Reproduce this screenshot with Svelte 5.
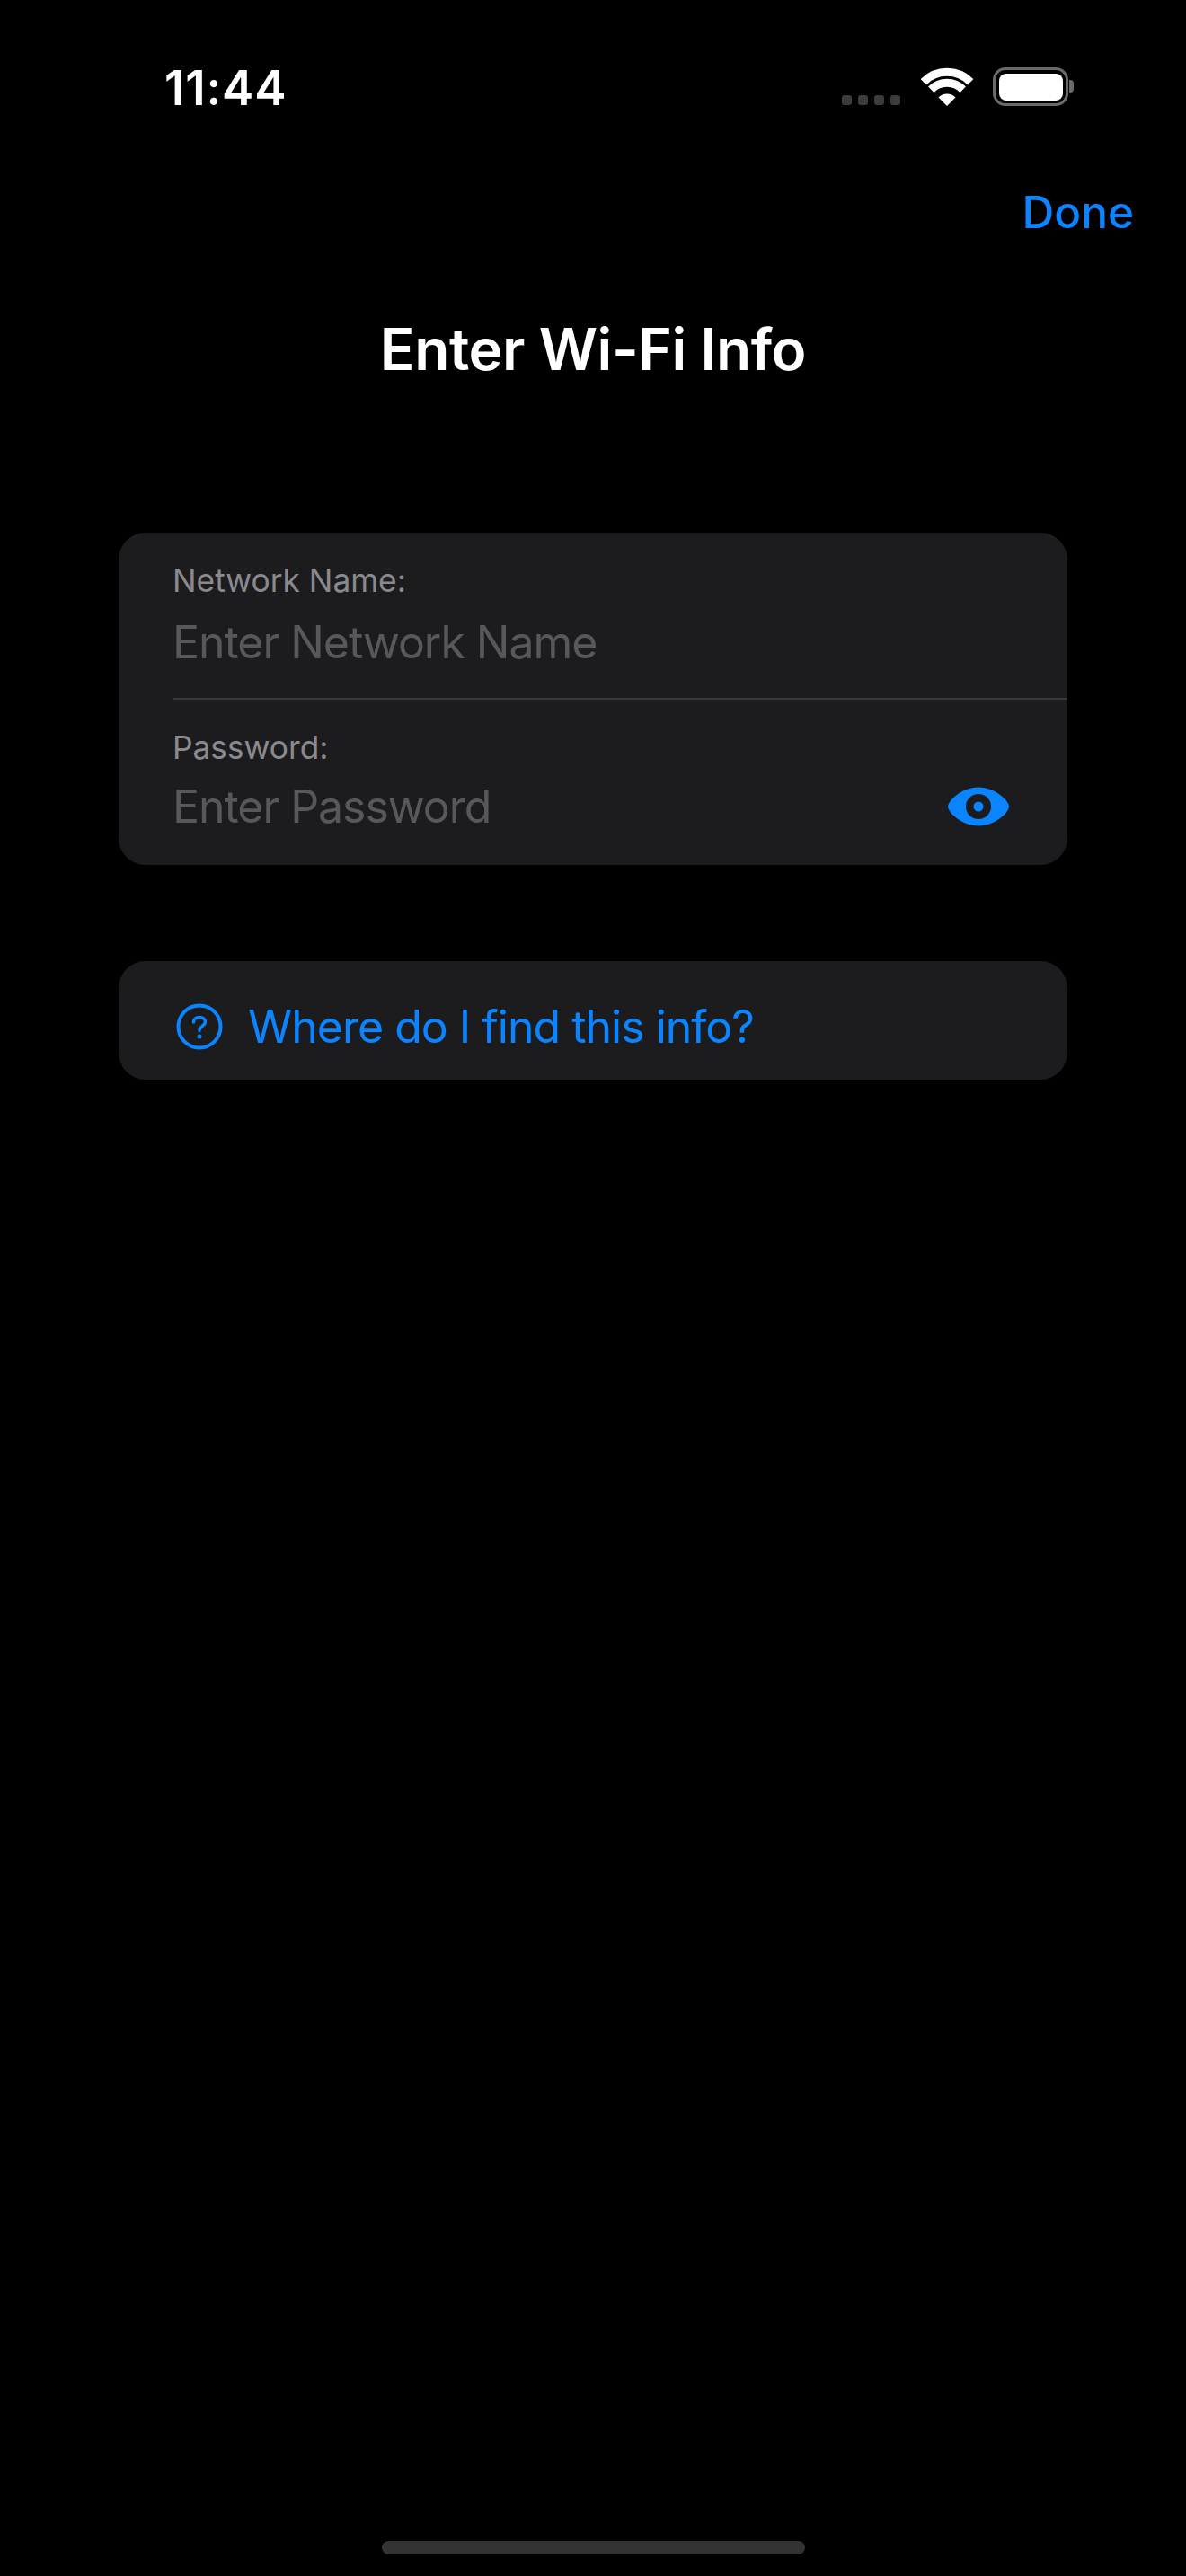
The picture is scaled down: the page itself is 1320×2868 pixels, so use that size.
<script>
  const fields = [
    { label: 'Network Name:', placeholder: 'Enter Network Name', eye: false },
    { label: 'Password:', placeholder: 'Enter Password', eye: true }
  ];
</script>

<div class="page">
  <header class="status">
    <span class="time">11:44</span>
    <div class="indicators">
      <div class="dots"><i></i><i></i><i></i><i></i></div>
      <svg class="wifi" width="58" height="43" viewBox="0 0 58 43" aria-hidden="true">
        <path d="M2.8 16.2A37 37 0 0 1 55.2 16.2" fill="none" stroke="#fff" stroke-width="9" />
        <path d="M11.3 24.7A25 25 0 0 1 46.700 24.700" fill="none" stroke="#fff" stroke-width="9" />
        <path d="M29 43L19.500 33.500A13.400 13.400 0 0 1 38.500 33.500Z" fill="#fff" />
      </svg>
      <div class="battery"><div class="fill"></div><div class="cap"></div></div>
    </div>
  </header>

  <div class="nav"><span class="done">Done</span></div>
  <h1>Enter Wi-Fi Info</h1>

  <section class="card">
    {#each fields as f, i}
      <div class="row" class:second={i === 1}>
        <div class="label">{f.label}</div>
        <div class="value">
          <span class="placeholder">{f.placeholder}</span>
          {#if f.eye}
            <svg class="eye" width="68" height="44" viewBox="0 0 68 44" aria-hidden="true">
              <path d="M34 0.500C53 0.500 68 16 68 22C68 28 53 43.500 34 43.500C15 43.500 0 28 0 22C0 16 15 0.500 34 0.500Z" fill="#0a84ff" />
              <circle cx="34" cy="22" r="14" fill="#1c1c1e" />
              <circle cx="34" cy="22" r="5.500" fill="#0a84ff" />
            </svg>
          {/if}
        </div>
      </div>
    {/each}
  </section>

  <section class="help">
    <svg class="q" width="52" height="52" viewBox="0 0 52 52" aria-hidden="true">
      <circle cx="26" cy="26" r="23.500" fill="none" stroke="#0a84ff" stroke-width="4" />
      <path d="M19.500 21C19.500 17.500 22.300 15.500 26 15.500C29.700 15.500 32.500 17.600 32.500 20.800C32.500 25 26 25.500 26 30.500" fill="none" stroke="#0a84ff" stroke-width="3.500" stroke-linecap="round" />
      <circle cx="26" cy="37" r="2.500" fill="#0a84ff" />
    </svg>
    <span>Where do I find this info?</span>
  </section>

  <div class="home"></div>
</div>

<style>
  :global(body) {
    margin: 0;
    background: #000;
  }
  .page {
    min-height: 2868px;
    box-sizing: border-box;
    display: flex;
    flex-direction: column;
    font-family: Inter, "Noto Sans", sans-serif;
    background: #000;
    color: #fff;
  }
  .status {
    display: flex;
    justify-content: space-between;
    padding: 68px 131px 0 183px;
    height: 60px;
  }
  .time {
    font-size: 53px;
    line-height: 60px;
    font-weight: 600;
    letter-spacing: 0.800px;
  }
  .indicators {
    display: flex;
    align-items: flex-start;
    padding-top: 7px;
  }
  .dots {
    display: flex;
    gap: 7px;
    margin: 31px 23px 0 0;
  }
  .dots i {
    width: 11px;
    height: 11px;
    border-radius: 3px;
    background: #3c3c3c;
  }
  .wifi {
    display: block;
    margin-right: 22px;
  }
  .battery {
    position: relative;
    box-sizing: border-box;
    width: 84px;
    height: 43px;
    border: 3.500px solid #6a6a6a;
    border-radius: 14px;
    padding: 3.500px;
  }
  .fill {
    height: 100%;
    background: #fff;
    border-radius: 8px;
  }
  .cap {
    position: absolute;
    right: -9px;
    top: 11px;
    width: 5px;
    height: 14px;
    background: #6a6a6a;
    border-radius: 0 4px 4px 0;
  }
  .nav {
    display: flex;
    justify-content: flex-end;
    padding-right: 58px;
    margin-top: 78px;
  }
  .done {
    font-size: 49.500px;
    line-height: 60px;
    font-weight: 500;
    color: #0a84ff;
  }
  h1 {
    margin: 85px 0 0;
    font-size: 64px;
    line-height: 76px;
    font-weight: 600;
    text-align: center;
    letter-spacing: -0.4px;
  }
  .card {
    margin: 166px 132px 0;
    background: #1c1c1e;
    border-radius: 30px;
  }
  .row {
    box-sizing: border-box;
    height: 186px;
    margin-left: 60px;
    padding-top: 34px;
    border-bottom: 2px solid #38383a;
  }
  .row.second {
    height: 184px;
    border-bottom: 0;
  }
  .label {
    font-size: 35.300px;
    line-height: 40px;
    color: #8a8a8e;
  }
  .value {
    display: flex;
    justify-content: space-between;
    align-items: center;
    padding-right: 65px;
    margin-top: 18px;
    height: 60px;
  }
  .second .value {
    margin-top: 15px;
  }
  .placeholder {
    font-size: 50px;
    line-height: 60px;
    font-weight: 400;
    letter-spacing: -1.050px;
    color: #58585c;
  }
  .help {
    box-sizing: border-box;
    height: 132px;
    margin: 107px 132px 0;
    padding: 43px 64px 29px;
    background: #1c1c1e;
    border-radius: 30px;
    display: flex;
    align-items: center;
    gap: 28px;
    font-size: 50px;
    line-height: 60px;
    font-weight: 400;
    letter-spacing: -1px;
    color: #0a84ff;
  }
  .q {
    display: block;
    flex: none;
  }
  .home {
    width: 471px;
    height: 15px;
    margin: auto auto 24px;
    background: #333;
    border-radius: 8px;
  }
</style>
